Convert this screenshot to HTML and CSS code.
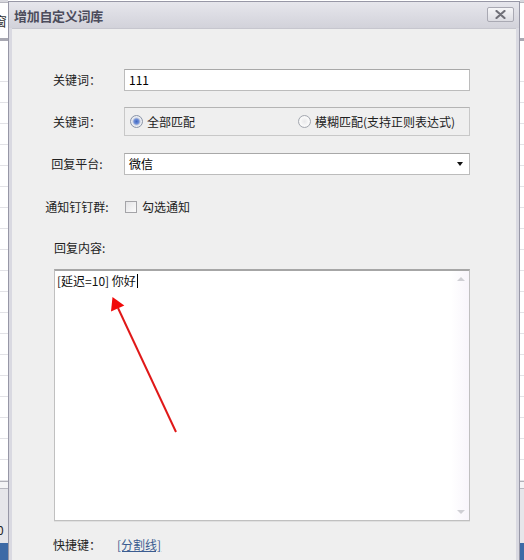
FILE: index.html
```html
<!DOCTYPE html>
<html lang="zh-CN">
<head>
<meta charset="utf-8">
<title>增加自定义词库</title>
<link rel="stylesheet" href="styles.css">
</head>
<body>
<div class="screen">
  <div class="bg-strip bg-left">
    <div class="bg-top"></div>
    <div class="bg-head"><span class="bg-char">窗</span></div>
    <div class="bg-rows">
      <div class="bg-row"></div><div class="bg-row"></div><div class="bg-row"></div><div class="bg-row"></div>
      <div class="bg-row"></div><div class="bg-row"></div><div class="bg-row"></div><div class="bg-row"></div>
      <div class="bg-row"></div><div class="bg-row"></div><div class="bg-row"></div><div class="bg-row"></div>
      <div class="bg-row"></div><div class="bg-row"></div><div class="bg-row"></div><div class="bg-row"></div>
      <div class="bg-row"></div><div class="bg-row"></div><div class="bg-row"></div><div class="bg-row"></div>
    </div>
    <div class="bg-foot"><span class="bg-num">0</span></div>
    <div class="bg-blue"></div>
  </div>

  <div class="dialog">
    <div class="titlebar">
      <span class="title">增加自定义词库</span>
      <span class="close">
        <svg width="11" height="9" viewBox="0 0 11 9"><path d="M1.5 1 L9.5 8 M9.5 1 L1.5 8" stroke="#707078" stroke-width="2.2" stroke-linecap="round"/></svg>
      </span>
    </div>
    <div class="content">
      <div class="row r1">
        <span class="label">关键词：</span>
        <div class="field input">111</div>
      </div>
      <div class="row r2">
        <span class="label">关键词：</span>
        <div class="field group">
          <span class="opt"><span class="radio on"></span>全部匹配</span>
          <span class="opt opt-right"><span class="radio"></span>模糊匹配(支持正则表达式)</span>
        </div>
      </div>
      <div class="row r3">
        <span class="label">回复平台:</span>
        <div class="field input select">微信<span class="caret-down"></span></div>
      </div>
      <div class="row r4">
        <span class="label">通知钉钉群:</span>
        <div class="check-wrap"><span class="checkbox"></span>勾选通知</div>
      </div>
      <div class="reply-label">回复内容:</div>
      <div class="textarea">
        <div class="ta-text">[延迟=10] 你好<span class="text-caret"></span></div>
        <div class="ta-scroll">
          <span class="sc-up"></span>
          <span class="sc-down"></span>
        </div>
        <svg class="annot" width="416" height="252" viewBox="0 0 416 252">
          <line x1="122" y1="163" x2="64" y2="39" stroke="#e01818" stroke-width="2"/>
          <polygon points="58.5,28 70.3,36.5 57,42.5" fill="#f00a0a"/>
        </svg>
      </div>
      <div class="row r5">
        <span class="label">快捷键：</span>
        <span class="link">[分割线]</span>
      </div>
    </div>
  </div>

  <div class="bg-strip bg-right">
    <div class="bg-top"></div>
    <div class="bg-head"></div>
    <div class="bg-rows">
      <div class="bg-row"></div><div class="bg-row"></div><div class="bg-row"></div><div class="bg-row"></div>
      <div class="bg-row"></div><div class="bg-row"></div><div class="bg-row"></div><div class="bg-row"></div>
      <div class="bg-row"></div><div class="bg-row"></div><div class="bg-row"></div><div class="bg-row"></div>
      <div class="bg-row"></div><div class="bg-row"></div><div class="bg-row"></div><div class="bg-row"></div>
      <div class="bg-row"></div><div class="bg-row"></div><div class="bg-row"></div><div class="bg-row"></div>
    </div>
    <div class="bg-foot"></div>
    <div class="bg-blue"></div>
  </div>
</div>
</body>
</html>
```

FILE: styles.css
```css
* { box-sizing: border-box; }

html, body {
  margin: 0;
  padding: 0;
}

body {
  width: 524px;
  height: 560px;
  overflow: hidden;
  background: #ffffff;
  font-family: "Noto Sans CJK SC", "Noto Sans", sans-serif;
  font-size: 12px;
  color: #222;
}

.screen {
  display: flex;
  height: 560px;
}

/* background application strips */
.bg-strip {
  display: flex;
  flex-direction: column;
  overflow: hidden;
  background: #fff;
}
.bg-left { width: 8px; }
.bg-right { width: 4px; }

.bg-top {
  height: 3px;
  background: #d8d8de;
  border-bottom: 1px solid #b8b8c0;
}
.bg-head {
  height: 38px;
  display: flex;
  align-items: center;
  border-bottom: 3px solid #a8a8b2;
}
.bg-char {
  font-size: 13px;
  margin-left: -6px;
  color: #333;
  line-height: 14px;
}
.bg-rows {
  display: flex;
  flex-direction: column;
  padding-top: 20px;
}
.bg-row {
  height: 21px;
  border-bottom: 1px solid #e2e2e6;
  flex: none;
}
.bg-foot {
  flex: 1;
  background: #e6e6ea;
  border-top: 1px solid #b0b0b8;
  display: flex;
  align-items: flex-end;
  padding-bottom: 6px;
  box-shadow: inset 0 6px 0 #f4f4f6, inset 0 7px 0 #b8b8c0;
}
.bg-num {
  font-size: 12px;
  color: #222;
  margin-left: -3px;
  line-height: 14px;
}
.bg-blue {
  height: 17px;
  background: #3d6aa6;
  flex: none;
}

/* dialog */
.dialog {
  width: 512px;
  margin-top: 1px;
  border: 1px solid #9797a6;
  border-bottom: none;
  background: #d9d9e1;
  padding: 0 3px;
  display: flex;
  flex-direction: column;
}

.titlebar {
  height: 26px;
  flex: none;
  display: flex;
  align-items: center;
  justify-content: space-between;
  background: linear-gradient(#e6e6ec, #d2d2da);
  margin: 0 -3px;
  padding-left: 5px;
  padding-right: 5px;
}
.title {
  font-weight: bold;
  font-size: 13px;
  color: #4c4c5c;
  letter-spacing: -0.3px;
  line-height: 16px;
  margin-top: 2px;
}
.close {
  width: 27px;
  height: 15px;
  margin-top: -2px;
  border: 1px solid #a9a9b3;
  border-radius: 2px;
  background: linear-gradient(#f6f6f8, #dcdce2);
  display: flex;
  align-items: center;
  justify-content: center;
}

.content {
  flex: 1;
  background: #efefef;
  border-top: 1px solid #c6c6ce;
  padding: 40px 46px 0 18px;
  display: flex;
  flex-direction: column;
}

.row {
  display: grid;
  grid-template-columns: 94px 346px;
  align-items: center;
}
.label {
  text-align: center;
  color: #222;
  line-height: 16px;
}

.field {
  background: #fff;
  border: 1px solid #bcbcbc;
  border-top-color: #a8a8a8;
}
.input {
  height: 22px;
  padding: 0 4px;
  line-height: 20px;
  color: #000;
}

.r1 { height: 22px; }
.r2 { height: 29px; margin-top: 16px; }
.r3 { height: 22px; margin-top: 17px; }
.r4 { height: 22px; margin-top: 21px; }
.r5 { height: 16px; margin-top: 16px; }

.group {
  height: 29px;
  background: #efefef;
  border-color: #c8c8c8;
  border-top-color: #b4b4b4;
  display: flex;
  align-items: center;
  padding: 0 14px 0 5px;
}
.opt {
  display: flex;
  align-items: center;
  color: #222;
  line-height: 16px;
}
.opt-right { margin-left: auto; }

.radio {
  width: 13px;
  height: 13px;
  border-radius: 50%;
  margin-right: 4px;
  border: 1px solid #a4a8b0;
  background: radial-gradient(circle at 50% 50%, #e8e8ea 0, #fafafa 60%, #d8d8dc 100%);
}
.radio.on {
  border-color: #8a94a8;
  background: radial-gradient(circle at 50% 50%, #3f66c0 0, #6f8fd8 2.5px, #c4cce0 3.6px, #eef0f4 4.6px, #d6d8de 100%);
}

.select {
  display: flex;
  align-items: center;
  justify-content: space-between;
  padding-right: 6px;
}
.caret-down {
  width: 0;
  height: 0;
  border-left: 3px solid transparent;
  border-right: 3px solid transparent;
  border-top: 4px solid #111;
}

.check-wrap {
  display: flex;
  align-items: center;
  color: #222;
  line-height: 16px;
}
.checkbox {
  width: 12px;
  height: 12px;
  margin-left: 1px;
  margin-right: 5px;
  border: 1px solid #a4a4a8;
  background: linear-gradient(135deg, #e4e4e6, #fbfbfb);
}

.reply-label {
  height: 16px;
  line-height: 16px;
  margin-top: 22px;
  margin-left: 24px;
  color: #222;
}

.textarea {
  position: relative;
  width: 416px;
  height: 252px;
  margin-top: 13px;
  margin-left: 24px;
  background: #fff;
  border: 1px solid #c0c0c0;
  border-top: 2px solid #a6a6a6;
  box-shadow: 0 1px 0 #e0e0e0;
}
.ta-text {
  padding: 2px 2px;
  line-height: 16px;
  color: #111;
  display: flex;
  align-items: center;
}
.text-caret {
  display: inline-block;
  width: 1px;
  height: 14px;
  background: #000;
  margin-left: 1px;
}
.ta-scroll {
  position: absolute;
  right: 0;
  top: 0;
  bottom: 0;
  width: 18px;
  background: linear-gradient(90deg, #ffffff, #f8f5fb);
}
.sc-up, .sc-down {
  position: absolute;
  left: 6px;
  width: 0;
  height: 0;
  border-left: 4px solid transparent;
  border-right: 4px solid transparent;
}
.sc-up {
  top: 6px;
  border-bottom: 4px solid #cfcfd4;
}
.sc-down {
  bottom: 6px;
  border-top: 4px solid #cfcfd4;
}

.annot {
  position: absolute;
  left: -1px;
  top: -2px;
}

.link {
  color: #3b5c90;
  text-decoration: underline;
  margin-left: -7px;
  line-height: 16px;
}
```
